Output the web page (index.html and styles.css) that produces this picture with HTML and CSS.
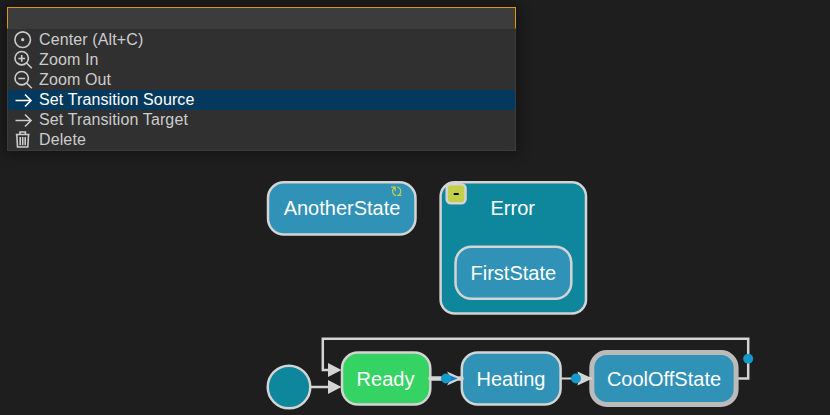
FILE: index.html
```html
<!DOCTYPE html>
<html lang="en">
<head>
<meta charset="utf-8">
<title>State editor</title>
<link rel="stylesheet" href="styles.css">
</head>
<body>
<svg class="diagram" viewBox="0 0 830 415">
  <g class="state">
    <rect x="268" y="182.3" width="147.5" height="52.2" rx="16"/>
    <text x="342" y="215">AnotherState</text>
    <g class="loop"><path d="M397.2 187A4.5 4.5 0 0 1 398.5 195.3M394.8 187.5A4.5 4.5 0 0 0 396.3 195.8M391 187.1h4.2v4.2M401.5 195.4h-4.2"/></g>
  </g>
  <g class="state">
    <rect class="group" x="440.6" y="182.3" width="145.4" height="131.2" rx="14"/>
    <text x="512.7" y="215">Error</text>
    <rect x="455.5" y="246.7" width="115.8" height="52" rx="16"/>
    <text x="513.3" y="279.5">FirstState</text>
    <rect class="toggle" x="446.7" y="184.2" width="18.8" height="19" rx="4"/>
    <path class="minus" d="M453.7 194h5"/>
  </g>
  <g class="edge">
    <path d="M738 378.5H748.2V338.8H322.8V370H330M311 387H330"/>
    <path class="head" d="M328 363L341.5 370L328 377ZM328 380L341.5 387L328 394Z"/>
  </g>
  <g class="state">
    <circle class="group" cx="289" cy="387" r="21.3"/>
    <rect class="active" x="342" y="352.5" width="88.3" height="52" rx="16"/>
    <text x="385.5" y="386">Ready</text>
    <rect x="461.8" y="352.5" width="98.8" height="52" rx="16"/>
    <text x="511" y="386">Heating</text>
    <rect class="selected" x="591.8" y="352.5" width="144.3" height="52" rx="15"/>
    <text x="664" y="386">CoolOffState</text>
  </g>
  <g class="edge">
    <path class="thick" d="M430.5 378.5H447M459 378.5H461.5"/>
    <path class="thin" d="M561 378.5H592"/>
    <path class="head" d="M447 371.5L462.5 378.5L447 385.5L451 378.5ZM577.5 371.5L592.5 378.5L577.5 385.5L579 378.5Z"/>
    <path class="tip" d="M449 375L457.5 378.5L449 382Z"/>
    <circle class="handle" cx="446" cy="378.5" r="5"/>
    <circle class="handle" cx="576" cy="378.5" r="5"/>
    <circle class="handle" cx="748.2" cy="358.7" r="5"/>
  </g>
</svg>
<div class="palette">
  <div class="search"></div>
  <ul class="actions">
    <li class="action"><svg class="icon" viewBox="0 0 20 20"><circle cx="9.7" cy="9.7" r="7.8"/><circle class="dot" cx="9.7" cy="9.7" r="1.6"/></svg>Center (Alt+C)</li>
    <li class="action"><svg class="icon" viewBox="0 0 20 20"><circle cx="8.7" cy="8.2" r="6.7"/><path d="M13.3 12.8L18.8 18.3M5.3 8.5h6.8M8.7 5v6.8"/></svg>Zoom In</li>
    <li class="action"><svg class="icon" viewBox="0 0 20 20"><circle cx="8.7" cy="8.2" r="6.7"/><path d="M13.3 12.8L18.8 18.3M5.3 8.5h6.8"/></svg>Zoom Out</li>
    <li class="action current"><svg class="icon" viewBox="0 0 20 20"><path d="M2.5 10.5H18M12 4.5L18 10.5L12 16.5"/></svg>Set Transition Source</li>
    <li class="action"><svg class="icon" viewBox="0 0 20 20"><path d="M2.5 10.5H18M12 4.5L18 10.5L12 16.5"/></svg>Set Transition Target</li>
    <li class="action"><svg class="icon" viewBox="0 0 20 20"><path d="M2.8 4.5H16.5M7 4.3V2H12.4V4.3M3.8 5L4.5 17H14.8L15.5 5M7.2 7V15.2M9.7 7V15.2M12.2 7V15.2"/></svg>Delete</li>
  </ul>
</div>
</body>
</html>
```
FILE: styles.css
```css
body {
  margin: 0;
  width: 830px;
  height: 415px;
  overflow: hidden;
  background: #1e1e1e;
  font-family: "Liberation Sans", Arial, sans-serif;
}
.diagram {
  position: absolute;
  inset: 0;
  width: 830px;
  height: 415px;
}
.state rect, .state circle {
  fill: #2f92b6;
  stroke: #d4d4d4;
  stroke-width: 2.5;
}
.state .group { fill: #0e869c; }
.state .active { fill: #34d363; }
.state .selected { stroke: #bbbbbb; stroke-width: 5; }
.state .toggle { fill: #c3cf47; }
.state text {
  fill: #fff;
  font-size: 20px;
  text-anchor: middle;
}
.minus { stroke: #000; stroke-width: 2; }
.loop { fill: none; stroke: #c3cf47; stroke-width: 1.1; }
.edge path { fill: none; stroke: #d4d4d4; stroke-width: 2.5; }
.edge .head { fill: #d4d4d4; stroke: none; }
.edge .thick { stroke-width: 4.6; stroke-linecap: round; }
.edge .thin { stroke-width: 2; }
.edge .tip { fill: #0a7fd0; stroke: none; }
.handle { fill: #1499cb; }
.palette {
  position: relative;
  width: 509px;
  height: 144px;
  margin: 7px 0 0 7px;
  background: #303030;
  box-shadow: 0 0 12px 3px rgba(0, 0, 0, 0.36);
}
.search {
  box-sizing: border-box;
  height: 22px;
  background: #3c3c3c;
  border: 1px solid #df970d;
  border-bottom: 1px solid #3c3c3c;
}
.actions {
  box-sizing: border-box;
  height: 122px;
  margin: 0;
  padding: 1px 0 0;
  list-style: none;
  border: 1px solid #3b3b3b;
  border-top: 0;
}
.action {
  display: flex;
  align-items: center;
  gap: 6px;
  height: 20px;
  padding-left: 5px;
  color: #cccccc;
  font-size: 16px;
  line-height: 20px;
  letter-spacing: 0.12px;
}
.action.current { background: #04395e; color: #fff; }
.icon {
  width: 20px;
  height: 20px;
  fill: none;
  stroke: currentColor;
  stroke-width: 1.6;
}
.icon .dot { fill: currentColor; stroke: none; }
```
